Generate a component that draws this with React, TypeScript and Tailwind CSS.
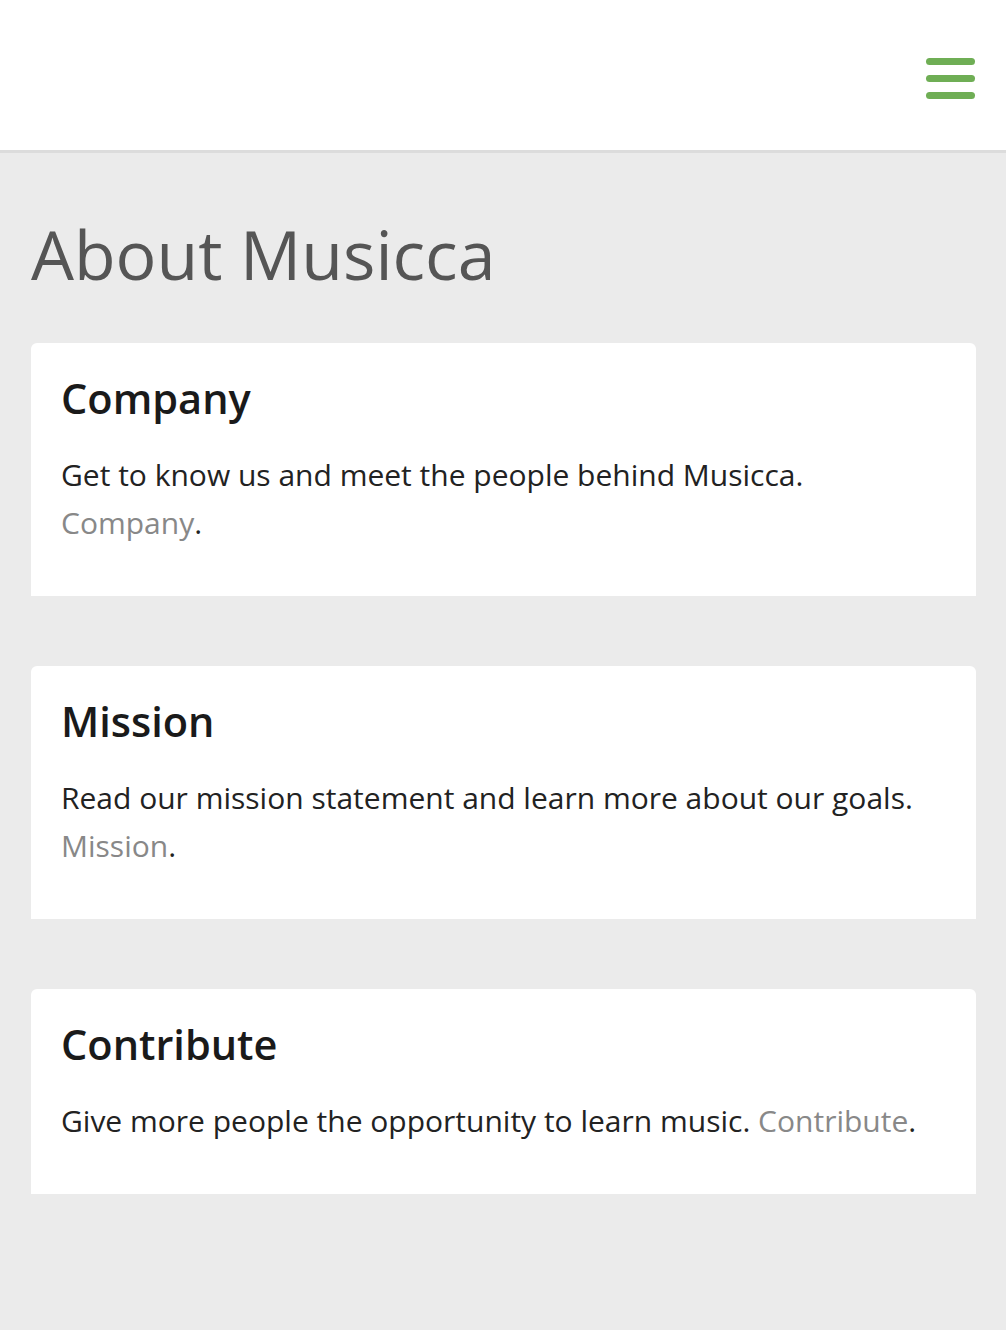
const sections = [
  {
    title: "Company",
    text: "Get to know us and meet the people behind Musicca.",
    link: "Company",
  },
  {
    title: "Mission",
    text: "Read our mission statement and learn more about our goals.",
    link: "Mission",
  },
  {
    title: "Contribute",
    text: "Give more people the opportunity to learn music.",
    link: "Contribute",
  },
];

export default function App() {
  return (
    <div className="min-h-screen bg-[#ebebeb] font-['Open_Sans',sans-serif]">
      <header className="h-[153px] bg-white border-b-[3px] border-[#dcdcdc] flex justify-end items-start pt-[58px] pr-[31px]">
        <button className="flex flex-col gap-[10px] w-[49px]" aria-label="Menu">
          <span className="block h-[7px] rounded-full bg-[#6fae55]" />
          <span className="block h-[7px] rounded-full bg-[#6fae55]" />
          <span className="block h-[7px] rounded-full bg-[#6fae55]" />
        </button>
      </header>

      <main className="pl-[31px] pr-[30px] pt-[60px] pb-[120px]">
        <h1 className="text-[68px] leading-[1.2] text-[#555] font-normal mb-[48px]">
          About Musicca
        </h1>

        <div className="flex flex-col gap-[70px]">
          {sections.map((s) => (
            <section key={s.title} className="bg-white rounded-t-[6px] px-[30px] pt-[26px] pb-[49px]">
              <h2 className="text-[41.5px] leading-[1.4] font-semibold text-[#1a1a1a] mb-[24px]">
                {s.title}
              </h2>
              <p className="text-[30px] leading-[48px] text-[#222]">
                {s.text} <a href="#" className="text-[#888]">{s.link}</a>.
              </p>
            </section>
          ))}
        </div>
      </main>
    </div>
  );
}
